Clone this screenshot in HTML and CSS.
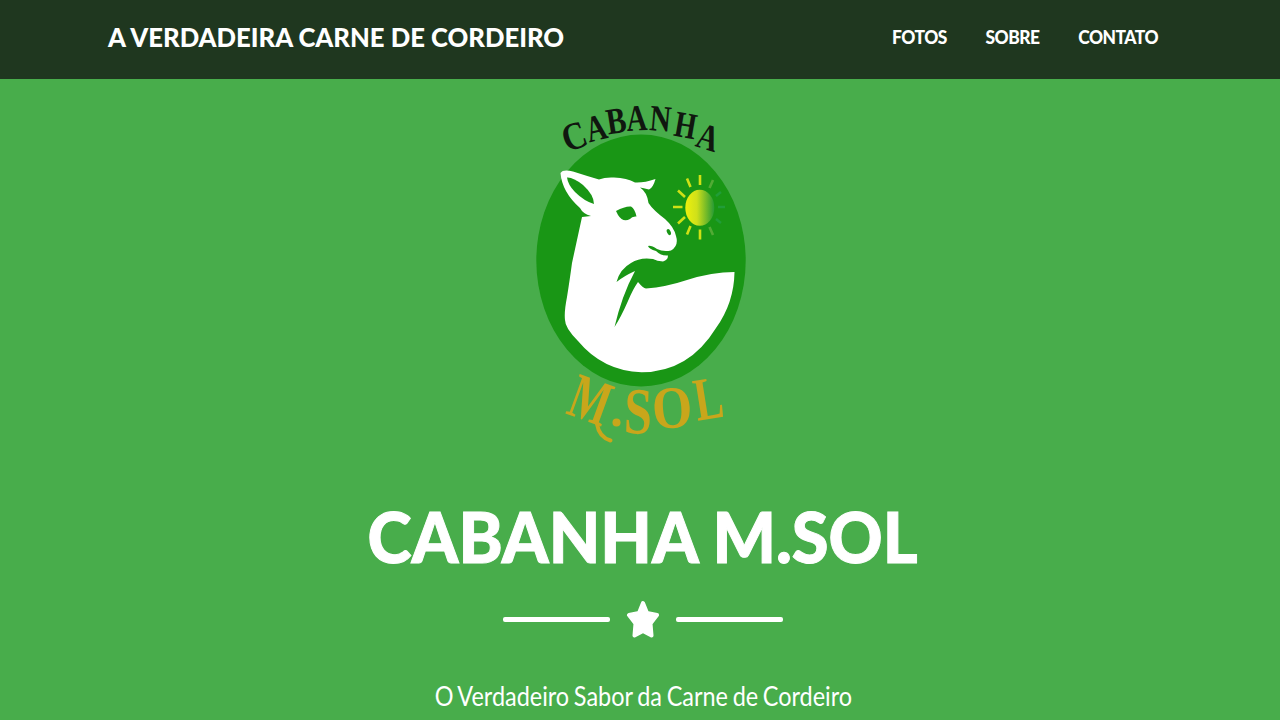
FILE: index.html
```html
<!DOCTYPE html>
<html lang="pt-BR">
<head>
<meta charset="utf-8">
<title>Cabanha M.Sol</title>
<link rel="stylesheet" href="styles.css">
</head>
<body>
<header class="navbar">
  <a class="brand">A VERDADEIRA CARNE DE CORDEIRO</a>
  <nav class="links">
    <a class="link">FOTOS</a>
    <a class="link">SOBRE</a>
    <a class="link">CONTATO</a>
  </nav>
</header>
<main class="hero">
  <svg class="logo" viewBox="530 95 220 355" role="img" aria-label="Cabanha M.Sol">
    <defs>
      <linearGradient id="sun"><stop offset="0" stop-color="#eef00c"/><stop offset=".4" stop-color="#cfe01a"/><stop offset="1" stop-color="#269a35"/></linearGradient>
    </defs>
    <ellipse cx="641" cy="260.5" rx="104.7" ry="126" fill="#199615"/>
    <path fill="#fff" d="M560.500 173Q563 169 573 171.500Q587 176 599 179.500Q605 177 614 177.500Q627 178 635 182.500Q644 183 655.500 179Q653 188 649 189.500Q643 188 640 187.500Q647 192 648.500 203Q653 210 665 219Q674 227 676 236Q679 246 671 250.500Q663 252 657 249Q651 245 648 246Q649 249 656 251Q661 256 668 255.500Q668 260 663 261.500Q657 261 653 259Q640 257 631 263Q620 269 616.500 282Q624 276 635 271Q628 284 623 298Q618 312 614.500 327Q621 317 628 301Q633 289 638 282Q643 288 646 288.500Q666 287 687 280Q712 272 734.500 272Q734 303 716 328Q689 372 641.500 372.300Q603 371 578 341Q565 328 565 320Q564 312 567 297Q570 278 572 263L582 217L591 216Q583 214 580 208Q562 192 560.500 173Z"/>
    <g fill="#199615">
      <path d="M567 177.500Q573 177 583 185Q594 195 594 204Q584 201 575 192Q568 185 567 177.500Z"/>
      <path d="M616 211Q625 206 631 206.500Q635 209 636.500 216.500Q632 216 630 219Q623 223 618 215Z"/>
      <ellipse cx="668.800" cy="232" rx="1.800" ry="3.200" transform="rotate(-25 669 232)"/>
    </g>
    <ellipse cx="699.800" cy="207.800" rx="14.500" ry="18" fill="url(#sun)"/>
    <g stroke-width="2.600">
      <g stroke="#cfe116"><path d="M700 185v-10M690.500 187l-3.500-8.500M685 197l-7-6.500M682.500 207h-9.500M685 217l-7 6.500M690.500 226l-3.500 8.500M700 229.500v10"/></g>
      <g stroke="#52ab35"><path d="M709.500 188l3.500-8M709.500 227l3.500 8"/></g>
      <g stroke="#219d38"><path d="M716 196l5-4M718 207h7M716 219l5 4"/></g>
    </g>
    <g class="arc" fill="#10170f">
      <text transform="translate(578.500 148.500) rotate(-20) scale(.9 1.050)">C</text>
      <text transform="translate(599 140) rotate(-14) scale(.76 1)">A</text>
      <text transform="translate(618 133) rotate(-9) scale(.8 1)">B</text>
      <text transform="translate(637.500 130.500) rotate(-3) scale(.78 1)">A</text>
      <text transform="translate(659.500 131) rotate(5) scale(.8 1)">N</text>
      <text transform="translate(683.500 137.500) rotate(10) scale(.76 1)">H</text>
      <text transform="translate(704.500 149) rotate(17) scale(.8 1)">A</text>
    </g>
    <g class="gold" fill="#c9a61b">
      <text class="initial" transform="translate(583.500 420) rotate(20) scale(.66 1)">M</text>
      <circle cx="616.500" cy="422.500" r="4"/>
      <text font-size="66" transform="translate(637.500 433.500) rotate(2) scale(.76 1)">S</text>
      <text font-size="60" transform="translate(673.500 427.500) rotate(-4) scale(.86 1)">O</text>
      <text font-size="61" transform="translate(711.500 418.500) rotate(-9) scale(.7 1)">L</text>
      <path class="swash" d="M597 424Q599 437 610.500 440.500"/>
    </g>
  </svg>
  <h1 class="title">CABANHA M.SOL</h1>
  <div class="divider">
    <span class="line"></span>
    <svg class="star" viewBox="0 0 34 38"><path fill="#fff" stroke="#fff" stroke-width="4" stroke-linejoin="round" d="M17 3L21 13L31 15L24.500 23.500L25.500 35.500L17 31L8.500 35.500L9.500 23.500L3 15L13 13Z"/></svg>
    <span class="line"></span>
  </div>
  <p class="tagline">O Verdadeiro Sabor da Carne de Cordeiro</p>
</main>
</body>
</html>
```
FILE: styles.css
```css
* { box-sizing: border-box; }
body {
  margin: 0;
  height: 720px;
  overflow: hidden;
  background: #48ad4b;
  color: #fff;
  font-family: Lato, "Liberation Sans", sans-serif;
}
.navbar {
  height: 79px;
  padding: 0 122px 6px 108px;
  display: flex;
  align-items: center;
  justify-content: space-between;
  background: #1f371f;
  font-weight: 900;
  white-space: nowrap;
}
.brand {
  width: 460px;
  font-size: 27px;
  transform: scaleX(.95);
  transform-origin: left;
}
.links {
  display: flex;
  gap: 41px;
  font-size: 18.5px;
  letter-spacing: -0.5px;
  transform: scaleX(.94);
  transform-origin: right;
}
.hero {
  display: flex;
  flex-direction: column;
  align-items: center;
  padding: 16px 0 0 6px;
}
.logo { width: 220px; height: 355px; margin-right: 6px; overflow: visible; }
.arc, .gold { font-family: "Liberation Serif", serif; font-weight: 700; text-anchor: middle; }
.arc { font-size: 37px; }
.initial { font-size: 64px; }
.swash { fill: none; stroke: #c9a61b; stroke-width: 4; stroke-linecap: round; }
.title {
  margin: 41px 0 2px;
  font-size: 71px;
  line-height: 90px;
  font-weight: 900;
  white-space: nowrap;
  -webkit-text-stroke: 1px #fff;
  transform: scaleX(.94);
}
.divider { display: flex; align-items: center; gap: 16px; height: 38px; margin-top: 17px; }
.line { width: 107px; height: 5px; border-radius: 2px; background: #fff; }
.star { width: 34px; height: 38px; }
.tagline {
  margin: 40px 0 0;
  font-size: 27px;
  line-height: 36px;
  word-spacing: -1.5px;
  white-space: nowrap;
  transform: scaleX(.868);
}
```
